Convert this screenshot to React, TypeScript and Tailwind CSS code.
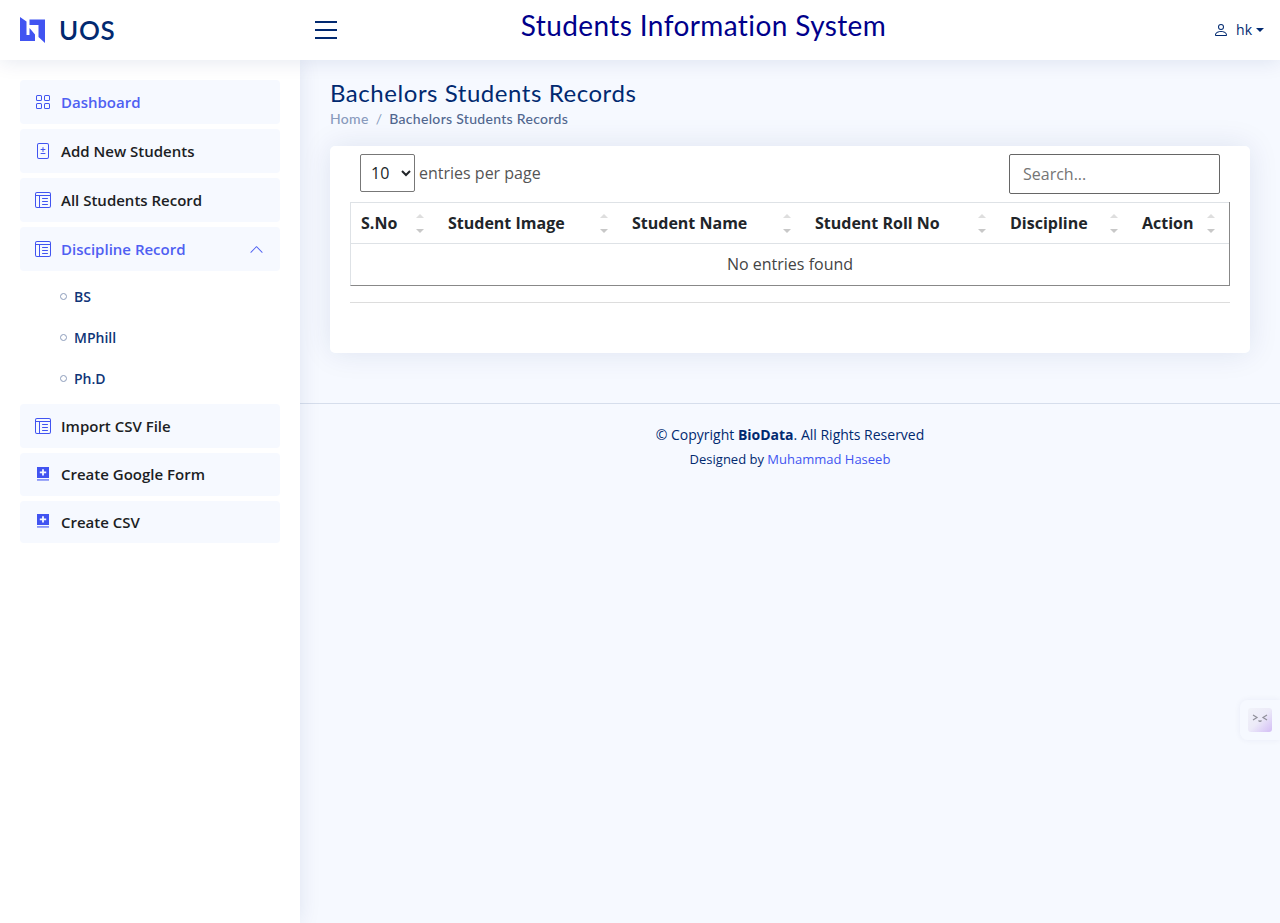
import { BsChevronUp, BsFileDiff, BsGrid, BsLayoutTextWindowReverse, BsPerson } from 'react-icons/bs';

const sans = "font-['Open_Sans',sans-serif]";
const nunito = "font-['Lato',sans-serif]";

const BookPlus = () => (
  <svg viewBox="0 0 16 16" className="w-4 h-4 text-[#4154f1]" fill="currentColor">
    <path d="M2 0h12v11H2z M7.100 2.300v2.300H4.800v1.700h2.300v2.300h1.800V6.300h2.300V4.600H8.900V2.300z" fillRule="evenodd" />
    <path d="M2 12h12v1.800H2z" opacity="0.6" />
  </svg>
);

const SortArrows = () => (
  <div className="absolute right-[14px] top-[11px] flex flex-col gap-[11px]">
    <div className="w-0 h-0 border-x-[4px] border-x-transparent border-b-[4px] border-b-[#dedede]" />
    <div className="w-0 h-0 border-x-[4px] border-x-transparent border-t-[4px] border-t-[#c8c8c8]" />
  </div>
);

const NavItem = ({ icon, label, active, extra, h = 'h-11' }: { icon: React.ReactNode; label: string; active?: boolean; extra?: React.ReactNode; h?: string }) => (
  <a className={`flex items-center ${h} rounded bg-[#f6f9ff] pl-[15px] pr-4 text-[15px] font-semibold ${active ? 'text-[#4f60f2]' : 'text-[#1c1e24]'}`}>
    <span className="w-4 text-[#4154f1] mr-[10px] flex justify-center text-base">{icon}</span>
    <span>{label}</span>
    {extra}
  </a>
);

const SubItem = ({ label }: { label: string }) => (
  <a className="flex items-center h-[41px] pl-10 text-sm font-semibold text-[#0f3578]">
    <span className="w-[7px] h-[7px] rounded-full border border-[#8d9dbb] mr-[7px]" />
    <span>{label}</span>
  </a>
);

const columns = [
  { label: 'S.No', w: 'w-[87px]' },
  { label: 'Student Image', w: 'w-[184px]' },
  { label: 'Student Name', w: 'w-[183px]' },
  { label: 'Student Roll No', w: 'w-[195px]' },
  { label: 'Discipline', w: 'w-[132px]' },
  { label: 'Action', w: 'flex-1' },
];

export default function App() {
  return (
    <div className={`min-h-[923px] bg-[#f6f9ff] flex flex-col ${sans}`}>
      <header className="h-[60px] bg-white flex items-center shadow-[0_2px_20px_rgba(1,41,112,0.1)] relative z-20">
        <div className="w-[280px] pl-5 flex items-center shrink-0">
          <svg viewBox="0 0 26 26" className="w-[26px] h-[26px] mr-[13px]" fill="#4154f1">
            <path d="M0 0 L6.500 4.500 V18 H9.500 V11 L15 17.500 V24 H0 Z" />
            <path d="M9.500 2.500 H25 V26 L18.500 20 V8 H9.500 Z" />
          </svg>
          <span className={`${nunito} text-[26px] font-semibold tracking-[0.7px] text-[#012970] leading-none`}>UOS</span>
        </div>
        <div className="flex flex-col gap-[6px] w-[22px] ml-[35px] shrink-0">
          <div className="h-[2px] bg-[#012970]" />
          <div className="h-[2px] bg-[#012970]" />
          <div className="h-[2px] bg-[#012970]" />
        </div>
        <div className="flex-1 flex justify-center pb-[10px] pr-[143px]">
          <h1 className={`${nunito} text-[28px] text-[#00008b] leading-none tracking-[0.4px]`}>Students Information System</h1>
        </div>
        <div className="flex items-center pr-4 text-[#012970] text-sm font-medium">
          <BsPerson className="w-4 h-4 mr-[7px]" />
          <span>hk</span>
          <div className="ml-1 w-0 h-0 border-x-[4px] border-x-transparent border-t-[4px] border-t-[#012970]" />
        </div>
      </header>

      <div className="flex flex-1">
        <aside className="w-[300px] shrink-0 bg-white p-5 flex flex-col shadow-[0_0_20px_rgba(1,41,112,0.1)] relative z-10">
          <div className="flex flex-col gap-[5px]">
            <NavItem icon={<BsGrid />} label="Dashboard" active />
            <NavItem icon={<BsFileDiff />} label="Add New Students" />
            <NavItem icon={<BsLayoutTextWindowReverse />} label="All Students Record" />
            <NavItem
              icon={<BsLayoutTextWindowReverse />}
              label="Discipline Record"
              active
              extra={<BsChevronUp className="ml-auto text-[15px]" />}
            />
          </div>
          <div className="flex flex-col pt-[5px] pb-[5px]">
            <SubItem label="BS" />
            <SubItem label="MPhill" />
            <SubItem label="Ph.D" />
          </div>
          <div className="flex flex-col gap-[5px]">
            <NavItem icon={<BsLayoutTextWindowReverse />} label="Import CSV File" />
            <NavItem icon={<BookPlus />} label="Create Google Form" h="h-[43px]" />
            <NavItem icon={<BookPlus />} label="Create CSV" h="h-[42px]" />
          </div>
        </aside>

        <main className="flex-1 flex flex-col">
          <div className="px-[30px] pt-[18px]">
            <h2 className={`${nunito} text-2xl font-normal tracking-[0.55px] text-[#012970] leading-[29px]`}>Bachelors Students Records</h2>
            <div className={`${nunito} flex text-sm mt-[1px] leading-[21px] font-medium tracking-[0.3px]`}>
              <span className="text-[#899bbd]">Home</span>
              <span className="text-[#899bbd] mx-[7px] font-normal">/</span>
              <span className="text-[#51678f]">Bachelors Students Records</span>
            </div>
          </div>

          <section className="mx-[30px] mt-[17px] h-[207px] bg-white rounded-[5px] shadow-[0_0_30px_rgba(1,41,112,0.1)] px-5 pt-2 flex flex-col">
            <div className="flex justify-between items-start h-[48px] pl-[10px] pr-[10px]">
              <div className="flex items-center">
                <select className="w-[55px] h-[38px] border border-[#777] rounded-[2px] pl-[6px] text-base text-[#212529] bg-white">
                  <option>10</option>
                </select>
                <span className="ml-1 text-base text-[#555]">entries per page</span>
              </div>
              <input
                placeholder="Search..."
                className="w-[211px] h-10 border border-[#666] rounded-[2px] px-[13px] text-base placeholder:text-[#757575] text-[#212529]"
              />
            </div>
            <div className="border border-[#dee2e6] border-r-[#888] border-b-[#888] border-t-0">
              <div className="flex h-[42px] border-t border-b border-[#dee2e6]">
                {columns.map((c) => (
                  <div key={c.label} className={`${c.w} relative flex items-center pl-[10px] text-base font-bold text-[#212529]`}>
                    {c.label}
                    <SortArrows />
                  </div>
                ))}
              </div>
              <div className="h-[41px] pb-[2px] flex items-center justify-center text-base text-[#444]">No entries found</div>
            </div>
            <div className="mt-4 border-t border-[#dddddd]" />
          </section>

          <footer className="mt-[50px] border-t border-[#d6deec] pt-5 flex flex-col items-center text-sm text-[#012970]">
            <div className="leading-[21px]">
              © Copyright <strong>BioData</strong>. All Rights Reserved
            </div>
            <div className="text-[13px] mt-1 leading-[20px]">
              Designed by <a className="text-[#4154f1]">Muhammad Haseeb</a>
            </div>
          </footer>
        </main>
      </div>

      <div className="fixed right-0 top-[700px] w-10 h-10 bg-[#f6f9ff] rounded-l-lg shadow-[0_0_6px_rgba(1,41,112,0.06)] flex items-center justify-end pr-2">
        <div className="w-6 h-6 rounded-[3px] bg-gradient-to-br from-[#f1f3f9] via-[#eceaf8] to-[#d3bdf5]">
          <svg viewBox="0 0 24 24" className="w-6 h-6" fill="none" stroke="#8f8f99" strokeWidth="1.200">
            <path d="M5 7 L9 9.500 L5 12" />
            <path d="M19 7 L15 9.500 L19 12" />
            <path d="M10.500 12.500 Q12 14 13.500 12.500" />
          </svg>
        </div>
      </div>
    </div>
  );
}
